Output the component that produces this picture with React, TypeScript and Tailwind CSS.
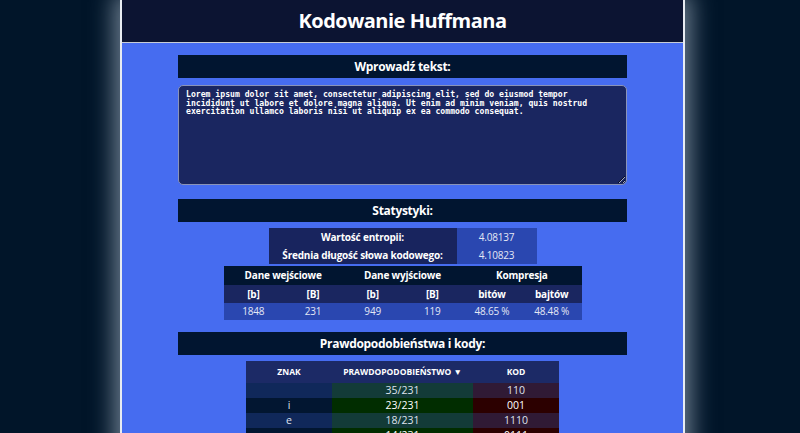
const lorem =
  "Lorem ipsum dolor sit amet, consectetur adipiscing elit, sed do eiusmod tempor incididunt ut labore et dolore magna aliqua. Ut enim ad minim veniam, quis nostrud exercitation ullamco laboris nisi ut aliquip ex ea commodo consequat."

const rows = [
  { ch: "", p: "35/231", code: "110" },
  { ch: "i", p: "23/231", code: "001" },
  { ch: "e", p: "18/231", code: "1110" },
  { ch: "a", p: "14/231", code: "0111" },
  { ch: "o", p: "13/231", code: "0110" },
]

function SectionTitle({ children }: { children: React.ReactNode }) {
  return (
    <div className="h-[23px] bg-[#011530] flex items-center justify-center text-[12px] font-bold text-white tracking-[-0.3px]">
      {children}
    </div>
  )
}

export default function App() {
  return (
    <div
      className="min-h-[433px] bg-[#011529] flex justify-center pl-[5px] overflow-hidden"
      style={{ fontFamily: '"Open Sans", "Noto Sans", sans-serif' }}
    >
      <div className="w-[565px] border-x-2 border-[#e8ecf2] bg-[#466cf0] shadow-[0_0_22px_6px_rgba(200,215,230,0.55)]">
        <header className="h-[43px] bg-[#0c1432] border-b-[1.5px] border-[#c8cdd6] flex items-center justify-center">
          <h1 className="text-[20px] font-bold text-white tracking-[-0.5px]">Kodowanie Huffmana</h1>
        </header>

        <main className="px-[56px] pt-[12px] pb-8">
          <SectionTitle>Wprowadź tekst:</SectionTitle>
          <textarea
            className="mt-[7px] block w-full h-[100px] rounded-[5px] border border-[#8a93b8] bg-[#1a2660] text-white px-[7px] py-[4px] text-[8.15px] leading-[8.5px] font-bold outline-none"
            style={{ fontFamily: '"DejaVu Sans Mono", monospace' }}
            defaultValue={lorem}
          />

          <div className="mt-[14px]">
            <SectionTitle>Statystyki:</SectionTitle>
          </div>

          <div className="mt-[6px] flex justify-center">
            <table className="w-[268px] text-[10px] tracking-[-0.2px] border-collapse">
              <tbody>
                <tr className="h-[18px]">
                  <td className="w-[188px] bg-[#18245e] text-white font-bold text-center">Wartość entropii:</td>
                  <td className="bg-[#2a47b0] text-[#e4e8f5] text-center">4.08137</td>
                </tr>
                <tr className="h-[18px]">
                  <td className="bg-[#18245e] text-white font-bold text-center">Średnia długość słowa kodowego:</td>
                  <td className="bg-[#2a47b0] text-[#e4e8f5] text-center">4.10823</td>
                </tr>
              </tbody>
            </table>
          </div>

          <div className="mt-[2px] flex justify-center">
            <table className="w-[358px] text-[10px] tracking-[-0.2px] border-collapse table-fixed">
              <tbody>
                <tr className="h-[19px] bg-[#011530] text-white font-bold">
                  <td colSpan={2} className="text-center">Dane wejściowe</td>
                  <td colSpan={2} className="text-center">Dane wyjściowe</td>
                  <td colSpan={2} className="text-center">Kompresja</td>
                </tr>
                <tr className="h-[18px] bg-[#1a2660] text-white font-bold">
                  <td className="text-center">[b]</td>
                  <td className="text-center">[B]</td>
                  <td className="text-center">[b]</td>
                  <td className="text-center">[B]</td>
                  <td className="text-center">bitów</td>
                  <td className="text-center">bajtów</td>
                </tr>
                <tr className="h-[17px] bg-[#2a47b0] text-[#e4e8f5]">
                  <td className="text-center">1848</td>
                  <td className="text-center">231</td>
                  <td className="text-center">949</td>
                  <td className="text-center">119</td>
                  <td className="text-center">48.65 %</td>
                  <td className="text-center">48.48 %</td>
                </tr>
              </tbody>
            </table>
          </div>

          <div className="mt-[12px]">
            <SectionTitle>Prawdopodobieństwa i kody:</SectionTitle>
          </div>

          <div className="mt-[6px] flex justify-center">
            <table className="w-[313px] border-collapse table-fixed">
              <thead>
                <tr className="h-[22px] bg-[#1c2a66] text-white text-[8.5px] font-bold uppercase">
                  <th className="w-[86px]">Znak</th>
                  <th className="w-[141px]">Prawdopodobieństwo ▼</th>
                  <th>Kod</th>
                </tr>
              </thead>
              <tbody className="text-[10.5px] text-[#dfe3ee]">
                {rows.map((r, i) => {
                  const odd = i % 2 === 1
                  return (
                    <tr key={i} className="h-[15px] leading-[15px]">
                      <td className={`text-center ${odd ? "bg-[#021631]" : "bg-[#10285a]"}`}>{r.ch}</td>
                      <td className={`text-center ${odd ? "bg-[#012d00] text-white" : "bg-[#133b38]"}`}>{r.p}</td>
                      <td className={`text-center ${odd ? "bg-[#2c0000] text-white" : "bg-[#301a35]"}`}>{r.code}</td>
                    </tr>
                  )
                })}
              </tbody>
            </table>
          </div>
        </main>
      </div>
    </div>
  )
}
